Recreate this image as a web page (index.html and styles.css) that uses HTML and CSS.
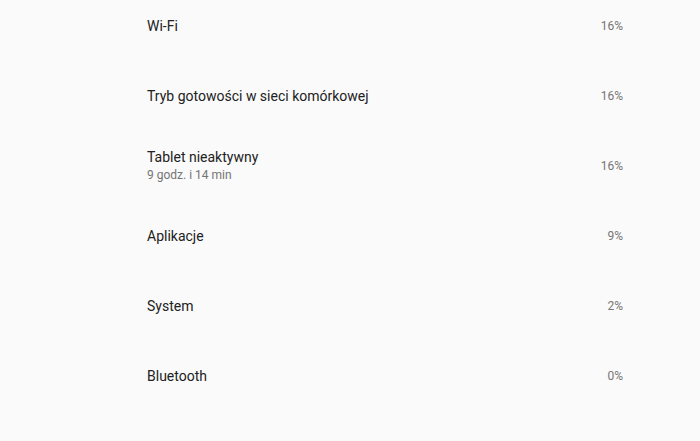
FILE: index.html
```html
<!DOCTYPE html>
<html lang="pl">
<head>
<meta charset="utf-8">
<title>Użycie baterii</title>
<link rel="stylesheet" href="styles.css">
</head>
<body>
<ul class="usage-list">
  <li class="usage-row">
    <div class="usage-text"><span class="usage-title">Wi-Fi</span></div>
    <span class="usage-pct">16%</span>
  </li>
  <li class="usage-row">
    <div class="usage-text"><span class="usage-title">Tryb gotowości w sieci komórkowej</span></div>
    <span class="usage-pct">16%</span>
  </li>
  <li class="usage-row">
    <div class="usage-text">
      <span class="usage-title">Tablet nieaktywny</span>
      <span class="usage-sub">9 godz. i 14 min</span>
    </div>
    <span class="usage-pct">16%</span>
  </li>
  <li class="usage-row">
    <div class="usage-text"><span class="usage-title">Aplikacje</span></div>
    <span class="usage-pct">9%</span>
  </li>
  <li class="usage-row">
    <div class="usage-text"><span class="usage-title">System</span></div>
    <span class="usage-pct">2%</span>
  </li>
  <li class="usage-row">
    <div class="usage-text"><span class="usage-title">Bluetooth</span></div>
    <span class="usage-pct">0%</span>
  </li>
</ul>
</body>
</html>
```
FILE: styles.css
```css
html, body {
  margin: 0;
  padding: 0;
  background: #fafafa;
  height: 100%;
  overflow: hidden;
}

body {
  font-family: Roboto, "Noto Sans", sans-serif;
  color: #212121;
}

/* list scrolled so the first row is partly above the top edge */
.usage-list {
  list-style: none;
  margin: -9px 0 0 0;
  padding: 0 77px 0 147px;
}

.usage-row {
  height: 70px;
  display: flex;
  align-items: center;
  justify-content: space-between;
}

.usage-text {
  display: flex;
  flex-direction: column;
}

.usage-title {
  font-size: 14px;
  line-height: 18px;
}

.usage-sub {
  font-size: 12px;
  line-height: 18px;
  color: #757575;
}

.usage-pct {
  font-size: 12px;
  color: #757575;
}
```
